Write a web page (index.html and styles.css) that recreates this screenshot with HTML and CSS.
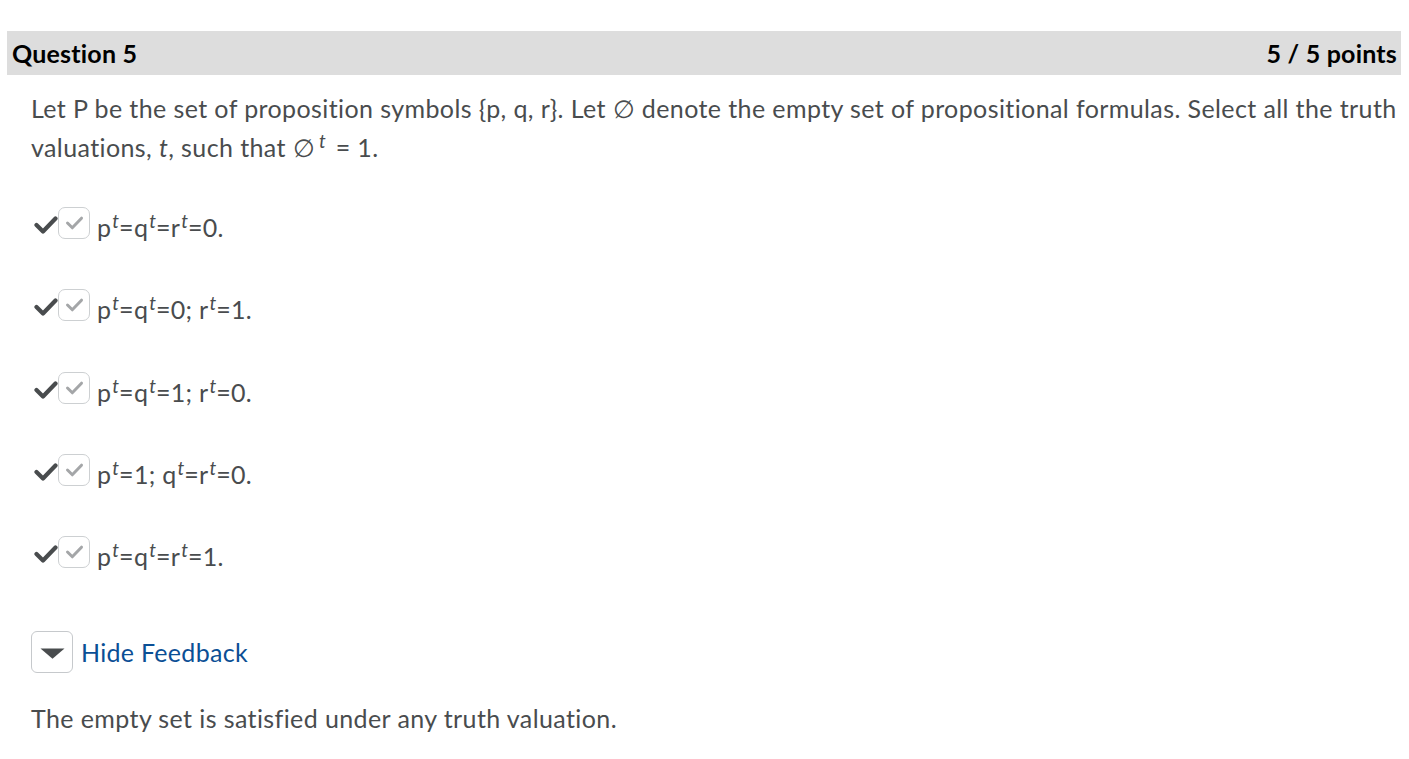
FILE: index.html
```html
<!DOCTYPE html>
<html>
<head>
<meta charset="utf-8">
<link rel="stylesheet" href="styles.css">
</head>
<body>
<div class="question">
  <div class="q-header">
    <h2 class="q-title">Question 5</h2>
    <div class="q-points">5 / 5 points</div>
  </div>
  <div class="q-body">
    <p class="q-text">Let P be the set of proposition symbols {p, q, r}. Let ∅ denote the empty set of propositional formulas. Select all the truth valuations, <i>t</i>, such that ∅<sup class="sup-wide"><i>t</i></sup> = 1.</p>
    <ul class="options">
      <li class="option">
        <svg class="mark" viewBox="0 0 24 20"><path d="M2.5 10 L9 16.5 L21.5 3.5" fill="none" stroke="#494c4e" stroke-width="4.2" stroke-linecap="round" stroke-linejoin="round"/></svg>
        <span class="box"><svg viewBox="0 0 24 20"><path d="M4 10 L9.5 15.5 L20 4.5" fill="none" stroke="#a4a6a8" stroke-width="3.4" stroke-linecap="round" stroke-linejoin="round"/></svg></span>
        <span class="opt-text">p<sup><i>t</i></sup>=q<sup><i>t</i></sup>=r<sup><i>t</i></sup>=0.</span>
      </li>
      <li class="option">
        <svg class="mark" viewBox="0 0 24 20"><path d="M2.5 10 L9 16.5 L21.5 3.5" fill="none" stroke="#494c4e" stroke-width="4.2" stroke-linecap="round" stroke-linejoin="round"/></svg>
        <span class="box"><svg viewBox="0 0 24 20"><path d="M4 10 L9.5 15.5 L20 4.5" fill="none" stroke="#a4a6a8" stroke-width="3.4" stroke-linecap="round" stroke-linejoin="round"/></svg></span>
        <span class="opt-text">p<sup><i>t</i></sup>=q<sup><i>t</i></sup>=0; r<sup><i>t</i></sup>=1.</span>
      </li>
      <li class="option">
        <svg class="mark" viewBox="0 0 24 20"><path d="M2.5 10 L9 16.5 L21.5 3.5" fill="none" stroke="#494c4e" stroke-width="4.2" stroke-linecap="round" stroke-linejoin="round"/></svg>
        <span class="box"><svg viewBox="0 0 24 20"><path d="M4 10 L9.5 15.5 L20 4.5" fill="none" stroke="#a4a6a8" stroke-width="3.4" stroke-linecap="round" stroke-linejoin="round"/></svg></span>
        <span class="opt-text">p<sup><i>t</i></sup>=q<sup><i>t</i></sup>=1; r<sup><i>t</i></sup>=0.</span>
      </li>
      <li class="option">
        <svg class="mark" viewBox="0 0 24 20"><path d="M2.5 10 L9 16.5 L21.5 3.5" fill="none" stroke="#494c4e" stroke-width="4.2" stroke-linecap="round" stroke-linejoin="round"/></svg>
        <span class="box"><svg viewBox="0 0 24 20"><path d="M4 10 L9.5 15.5 L20 4.5" fill="none" stroke="#a4a6a8" stroke-width="3.4" stroke-linecap="round" stroke-linejoin="round"/></svg></span>
        <span class="opt-text">p<sup><i>t</i></sup>=1; q<sup><i>t</i></sup>=r<sup><i>t</i></sup>=0.</span>
      </li>
      <li class="option">
        <svg class="mark" viewBox="0 0 24 20"><path d="M2.5 10 L9 16.5 L21.5 3.5" fill="none" stroke="#494c4e" stroke-width="4.2" stroke-linecap="round" stroke-linejoin="round"/></svg>
        <span class="box"><svg viewBox="0 0 24 20"><path d="M4 10 L9.5 15.5 L20 4.5" fill="none" stroke="#a4a6a8" stroke-width="3.4" stroke-linecap="round" stroke-linejoin="round"/></svg></span>
        <span class="opt-text">p<sup><i>t</i></sup>=q<sup><i>t</i></sup>=r<sup><i>t</i></sup>=1.</span>
      </li>
    </ul>
    <div class="feedback-toggle">
      <button class="toggle-btn"><svg viewBox="0 0 25 11"><path d="M0.5 0.5 L24.5 0.5 L12.5 10.8 Z" fill="#494c4e"/></svg></button>
      <a class="toggle-link">Hide Feedback</a>
    </div>
    <p class="feedback">The empty set is satisfied under any truth valuation.</p>
  </div>
</div>
</body>
</html>
```

FILE: styles.css
```css
html, body {
  margin: 0;
  padding: 0;
  background: #fff;
}
body {
  font-family: Lato, "Liberation Sans", sans-serif;
  color: #494c4e;
}
.question {
  margin: 31px 8px 0 7px;
}
.q-header {
  display: flex;
  justify-content: space-between;
  align-items: center;
  height: 44px;
  background: #dddddd;
  padding: 0 4px 0 5px;
}
.q-title, .q-points {
  margin: 0;
  font-size: 25px;
  font-weight: 700;
  letter-spacing: 0.2px;
  color: #000;
}
.q-body {
  padding: 0 0 0 24px;
}
.q-text {
  margin: 14px 0 0 0;
  font-size: 25px;
  letter-spacing: 0.4px;
  line-height: 39px;
}
sup {
  font-size: 19px;
  line-height: 0;
  vertical-align: 9px;
  padding: 0 0 0 1px;
  letter-spacing: 0;
}
.sup-wide {
  padding: 0 3px 0 4px;
}
.options {
  list-style: none;
  margin: 39px 0 0 0;
  padding: 0;
  display: flex;
  flex-direction: column;
  gap: 48.3px;
}
.option {
  display: flex;
  align-items: center;
  height: 34px;
}
.mark {
  width: 24px;
  height: 20px;
  margin: 4px 0 0 3px;
}
.box {
  box-sizing: border-box;
  width: 32px;
  height: 32px;
  border: 1px solid #cdd0d2;
  border-radius: 7px;
  display: flex;
  align-items: center;
  justify-content: center;
}
.box svg {
  width: 21px;
  height: 18px;
}
.opt-text {
  font-size: 25px;
  letter-spacing: 0.3px;
  margin-left: 7px;
  margin-top: 8px;
}
.feedback-toggle {
  display: flex;
  align-items: center;
  gap: 8px;
  margin-top: 62px;
}
.toggle-btn {
  box-sizing: border-box;
  width: 42px;
  height: 42px;
  border: 1px solid #c6c9cc;
  border-radius: 6px;
  background: #fff;
  padding: 0;
  display: flex;
  align-items: center;
  justify-content: center;
}
.toggle-btn svg {
  width: 25px;
  height: 11px;
  margin-top: 3px;
}
.toggle-link {
  font-size: 25px;
  letter-spacing: 0.3px;
  color: #0b4f95;
}
.feedback {
  margin: 30px 0 0 0;
  font-size: 25px;
  letter-spacing: 0.4px;
}
```
